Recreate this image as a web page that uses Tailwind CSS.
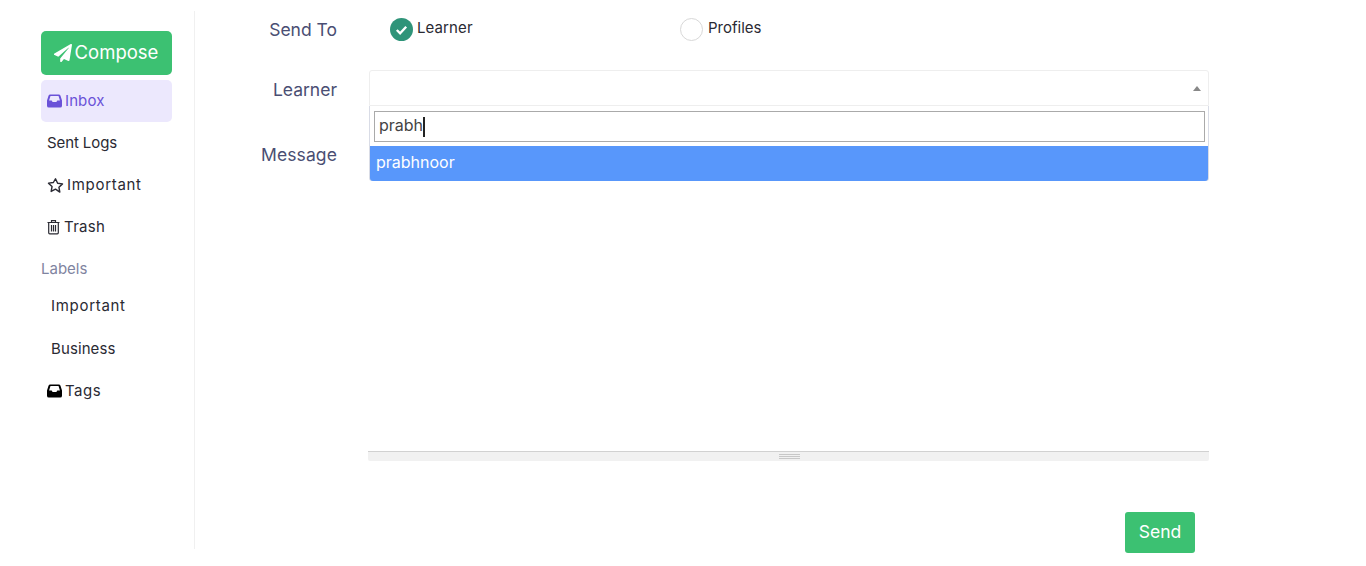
<!DOCTYPE html>
<html lang="en">
<head>
    <meta charset="UTF-8">
    <meta name="viewport" content="width=device-width, initial-scale=1.0">
    <title>Compose</title>
    <script src="https://cdn.jsdelivr.net/npm/@tailwindcss/browser@4"></script>
</head>
<body class="bg-white font-['Inter',sans-serif] h-[566px] overflow-hidden">
    <div class="flex h-full pt-[11px]">
        <!-- sidebar -->
        <aside class="w-[195px] h-[538px] shrink-0 border-r border-[#f0f0f0] pl-[41px] pr-[22px] pt-[20px]">
            <button class="w-full h-[44px] rounded-[5px] bg-[#3cc172] text-white text-[18.500px] flex items-center justify-center gap-[3px] pb-[1px] pr-[1px]">
                <svg class="w-[18px] h-[18px]" viewBox="0 0 512 512" fill="currentColor"><path d="M476 3 12 271c-18 10-16 36 3 44l107 45L411 105c5-5 13 2 9 8L176 410v81c0 24 29 33 43 16l64-78 126 53c14 6 31-3 33-18L511 28c4-22-18-37-35-25z"/></svg>
                <span>Compose</span>
            </button>
            <nav class="mt-[5px] text-[15px] text-[#2a2a33]">
                <a class="h-[42px] rounded-[5px] bg-[#ece8fd] text-[#6a52d8] flex items-center gap-[3px] px-[6px]">
                    <svg class="w-[15px] h-[14px]" viewBox="0 1 16 14" fill="currentColor" fill-rule="evenodd"><path d="M3.500 1h9a2 2 0 0 1 1.900 1.400L16 7.500V13a2 2 0 0 1-2 2H2a2 2 0 0 1-2-2V7.500l1.600-5.100A2 2 0 0 1 3.500 1zm.2 1.700L2.200 7.500H5L6 9h4l1-1.500h2.800l-1.500-4.800z"/></svg>
                    <span class="tracking-[0.1px]">Inbox</span>
                </a>
                <a class="h-[42px] flex items-center px-[6px] tracking-[-0.1px]">Sent Logs</a>
                <a class="h-[42px] flex items-center gap-[3px] px-[6px]">
                    <svg class="w-[17px] h-[17px]" viewBox="0 0 24 24" fill="none" stroke="currentColor" stroke-width="2" stroke-linejoin="round"><path d="m12 2.500 3 6.300 6.900.9-5 4.800 1.200 6.900L12 17.200l-6.100 3.200 1.200-6.900-5-4.800 6.900-.9z"/></svg>
                    <span class="tracking-[0.7px]">Important</span>
                </a>
                <a class="h-[42px] flex items-center gap-[4px] px-[6px]">
                    <svg class="w-[13px] h-[16px]" viewBox="0 0 13 15" fill="none" stroke="currentColor" stroke-width="1.200"><path d="M.5 3h12M4.500 3V1.200h4V3M1.700 3v10.300a1 1 0 0 0 1 1h7.600a1 1 0 0 0 1-1V3M4.500 5.500v6.500M6.500 5.500v6.500M8.500 5.500v6.500"/></svg>
                    <span class="tracking-[0.3px]">Trash</span>
                </a>
            </nav>
            <p class="mt-[9px] h-[24px] leading-[24px] text-[15px] text-[#7f84a0]">Labels</p>
            <nav class="mt-[4px] text-[15px] text-[#2a2a33]">
                <a class="h-[43px] flex items-center px-[10px] tracking-[0.7px]">Important</a>
                <a class="h-[42px] flex items-center px-[10px] tracking-[0.1px]">Business</a>
                <a class="h-[42px] flex items-center gap-[3px] px-[6px]">
                    <svg class="w-[15px] h-[14px] text-black" viewBox="0 1 16 14" fill="currentColor" fill-rule="evenodd"><path d="M3.500 1h9a2 2 0 0 1 1.900 1.400L16 7.500V13a2 2 0 0 1-2 2H2a2 2 0 0 1-2-2V7.500l1.600-5.100A2 2 0 0 1 3.500 1zm.2 1.700L2.200 7.500H5L6 9h4l1-1.500h2.800l-1.500-4.800z"/></svg>
                    <span class="tracking-[0.5px]">Tags</span>
                </a>
            </nav>
        </aside>

        <!-- form -->
        <main class="w-[1015px] shrink-0 text-[#4a4e73] text-[17.500px]">
            <div class="flex h-[36px] items-center">
                <label class="w-[142px] text-right pt-[2px]">Send To</label>
                <div class="ml-[53px] flex items-center text-[15px] text-[#2a2a33]">
                    <div class="w-[290px] flex items-center gap-[4px]">
                        <span class="w-[23px] h-[23px] rounded-full bg-[#2f9479] flex items-center justify-center">
                            <svg class="w-[15px] h-[15px]" viewBox="0 0 16 16" fill="none" stroke="white" stroke-width="2.500"><path d="m3 8.500 3.500 3.500L13 5"/></svg>
                        </span>
                        <span class="-mt-[2px] tracking-[0.1px]">Learner</span>
                    </div>
                    <div class="flex items-center gap-[5px]">
                        <span class="w-[23px] h-[23px] rounded-full border border-[#d8d8d8] bg-white"></span>
                        <span class="-mt-[2px]">Profiles</span>
                    </div>
                </div>
            </div>
            <div class="flex mt-[23px]">
                <div class="w-[142px] shrink-0 text-right pt-[2px]">
                    <p class="h-[36px] leading-[36px]">Learner</p>
                    <p class="mt-[29px] h-[36px] leading-[36px] tracking-[0.1px]">Message</p>
                </div>
                <div class="ml-[32px] w-[840px] relative">
                    <div class="h-[36px] border border-[#eeeeee] rounded-t-[3px] flex items-center justify-end pr-[7px]">
                        <span class="w-0 h-0 border-x-[4px] border-x-transparent border-b-[5px] border-b-[#888888]"></span>
                    </div>
                    <!-- dropdown -->
                    <div class="absolute top-[36px] left-0 w-full h-[75px] bg-white border-x border-b border-[#d9dce6] rounded-b-[3px] z-10">
                        <div class="ml-[4px] mr-[3px] mt-[5px] h-[31px] border border-[#aaaaaa] flex items-center pl-[4px] pb-[3px] text-[16px] text-[#444444]">
                            <span>prabh</span><span class="w-[2px] h-[20px] bg-[#222222] mt-[3px]"></span>
                        </div>
                        <div class="mt-[4px] h-[35px] bg-[#5897fb] text-white text-[16px] flex items-center px-[6px] pb-[3px] rounded-b-[3px]">prabhnoor</div>
                    </div>
                    <!-- editor -->
                    <div class="h-[345px]"></div>
                    <div class="h-[10px] -ml-px pl-[2px] bg-[#f1f1f1] border-t border-[#d1d1d1] flex items-center justify-center rounded-b-[2px]">
                        <span class="w-[21px] h-[5px] border-y border-[#c8c8c8] flex items-center">
                            <span class="w-full h-px bg-[#c8c8c8]"></span>
                        </span>
                    </div>
                    <div class="flex justify-end mt-[51px] pr-[14px]">
                        <button class="w-[70px] h-[41px] rounded-[3px] bg-[#3cc172] text-white text-[17.500px]">Send</button>
                    </div>
                </div>
            </div>
        </main>
    </div>
</body>
</html>
